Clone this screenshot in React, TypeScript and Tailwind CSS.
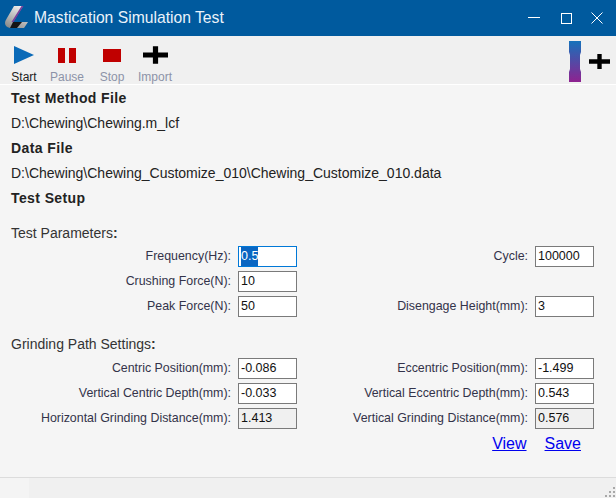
import React from "react";

const font = { fontFamily: '"Liberation Sans", Arial, sans-serif' };

function Plus({ w, h }: { w: number; h: number }) {
  return (
    <svg width={w} height={h} viewBox="0 0 24 17">
      <path d="M9.5 0h5v6H24v5h-9.500v6h-5v-6H0V6h9.500z" fill="#000" />
    </svg>
  );
}

function Tool({ label, active, icon, w }: { label: string; active?: boolean; icon: React.ReactNode; w: string }) {
  return (
    <div className={`flex flex-col items-center ${w}`}>
      <div className="flex h-[26px] items-center justify-center">{icon}</div>
      <span className={`mt-[2px] text-[12px] leading-[14px] ${active ? "text-[#222]" : "text-[#8c93a8]"}`}>{label}</span>
    </div>
  );
}

function Field({ label, value, focused, readOnly }: { label: string; value?: string; focused?: boolean; readOnly?: boolean }) {
  return (
    <div className="flex h-[21px] items-center justify-end">
      <span className="mr-[7px] whitespace-nowrap text-[12.4px] leading-none text-[#33334a]">{label}</span>
      <div
        className={`flex h-[21px] w-[59px] shrink-0 items-center border pl-[2px] text-[12.5px] ${
          focused ? "border-[#0078d7] bg-white" : readOnly ? "border-[#7a7a7a] bg-[#f0f0f0]" : "border-[#7a7a7a] bg-white"
        } text-[#111]`}
      >
        {focused ? <span className="bg-[#0a66c2] text-white">{value}</span> : <span className="-mt-[1px]">{value}</span>}
      </div>
    </div>
  );
}

function Spacer() {
  return <div className="h-[21px]" />;
}

export default function App() {
  return (
    <div className="flex h-[498px] w-[616px] flex-col overflow-hidden bg-[#f5f5f5]" style={font}>
      {/* Title bar */}
      <div className="flex h-[36px] shrink-0 items-center bg-[#005a9e] text-white">
        <svg width="26" height="26" viewBox="0 0 26 26" className="ml-[4px]">
          <defs>
            <linearGradient id="lg" x1="0.7" y1="0" x2="0.2" y2="1">
              <stop offset="0" stopColor="#f0f0f0" />
              <stop offset="1" stopColor="#8a8a8a" />
            </linearGradient>
          </defs>
          <path d="M10 1h9L9 17h15l-4 6H6Q1 22 1 18Q1 16 3 13z" fill="url(#lg)" />
          <path d="M17.500 1h2L9.500 17h-2z" fill="#7a3f9a" />
          <path d="M9 17h9l-5 6H6z" fill="#141414" />
        </svg>
        <span className="ml-[4px] text-[15.7px] text-[#eaf2fa]">Mastication Simulation Test</span>
        <div className="ml-auto flex items-center">
          <svg width="12" height="12" viewBox="0 0 12 12" className="mr-[21px]"><path d="M0 5.500h12" stroke="#fff" /></svg>
          <svg width="11" height="11" viewBox="0 0 11 11" className="mr-[19px]"><rect x=".5" y=".5" width="10" height="10" fill="none" stroke="#fff" /></svg>
          <svg width="12" height="12" viewBox="0 0 12 12" className="mr-[13px]"><path d="M.5.5l11 11M11.500.5l-11 11" stroke="#fff" /></svg>
        </div>
      </div>

      {/* Toolbar */}
      <div className="flex h-[48px] shrink-0 items-start bg-[#f0f0f0] pl-[9px] pt-[6px]">
        <Tool
          label="Start"
          active
          w="w-[30px]"
          icon={<svg width="20" height="18" viewBox="0 0 20 18"><path d="M0 0l20 9L0 18z" fill="#0a6ab8" /></svg>}
        />
        <Tool
          label="Pause"
          w="w-[38px] ml-[9px]"
          icon={<svg width="18" height="15" viewBox="0 0 18 15"><path d="M0 0h7v15H0zM11 0h7v15h-7z" fill="#c00000" /></svg>}
        />
        <Tool
          label="Stop"
          w="w-[30px] ml-[11px]"
          icon={<svg width="18" height="13" viewBox="0 0 18 13"><rect width="18" height="13" fill="#c00000" /></svg>}
        />
        <Tool label="Import" w="w-[36px] ml-[10px]" icon={<Plus w={25} h={18} />} />
        <div className="ml-auto mr-[6px] -mt-[1px] flex items-center">
          <svg width="12" height="41" viewBox="0 0 12 41">
            <defs>
              <linearGradient id="sp" x1="0" y1="0" x2="0" y2="1">
                <stop offset="0" stopColor="#1672bb" />
                <stop offset="1" stopColor="#8f2290" />
              </linearGradient>
            </defs>
            <path d="M0 0h12v11l-1 3v14l1 3v10H0V31l1-3V14l-1-3z" fill="url(#sp)" />
          </svg>
          <div className="ml-[8px] flex"><Plus w={21} h={17} /></div>
        </div>
      </div>
      <div className="h-px shrink-0 bg-white" />

      {/* File info */}
      <div className="flex flex-col px-[11px] pt-px text-[#222]">
        <div className="flex h-[25px] items-center text-[14px] font-bold tracking-[0.4px]">Test Method File</div>
        <div className="flex h-[25px] items-center text-[14px]">D:\Chewing\Chewing.m_lcf</div>
        <div className="flex h-[25px] items-center text-[14px] font-bold tracking-[0.4px]">Data File</div>
        <div className="flex h-[25px] items-center text-[14px]">D:\Chewing\Chewing_Customize_010\Chewing_Customize_010.data</div>
        <div className="flex h-[25px] items-center text-[14px] font-bold tracking-[0.4px]">Test Setup</div>
      </div>

      {/* Parameters */}
      <div className="mt-[14px] px-[11px] text-[14px] leading-[16px] text-[#333]">
        Test Parameters<b>:</b>
      </div>
      <div className="mt-[5px] grid w-[594px] grid-cols-[297px_297px] gap-y-[4px]">
        <Field label="Frequency(Hz):" value="0.5" focused />
        <Field label="Cycle:" value="100000" />
        <Field label="Crushing Force(N):" value="10" />
        <Spacer />
        <Field label="Peak Force(N):" value="50" />
        <Field label="Disengage Height(mm):" value="3" />
      </div>

      <div className="mt-[19px] px-[11px] text-[14px] leading-[16px] text-[#333]">
        Grinding Path Settings<b>:</b>
      </div>
      <div className="mt-[6px] grid w-[594px] grid-cols-[297px_297px] gap-y-[4px]">
        <Field label="Centric Position(mm):" value="-0.086" />
        <Field label="Eccentric Position(mm):" value="-1.499" />
        <Field label="Vertical Centric Depth(mm):" value="-0.033" />
        <Field label="Vertical Eccentric Depth(mm):" value="0.543" />
        <Field label="Horizontal Grinding Distance(mm):" value="1.413" readOnly />
        <Field label="Vertical Grinding Distance(mm):" value="0.576" readOnly />
      </div>

      {/* Links */}
      <div className="mt-[6px] flex justify-end pr-[35px] text-[16px] leading-[18px] text-[#0000ee]">
        <a className="underline" href="#">View</a>
        <a className="ml-[18px] underline" href="#">Save</a>
      </div>

      {/* Status bar */}
      <div className="relative mt-auto flex h-[21px] shrink-0 border-t border-[#dcdcdc] bg-[#f0f0f0]">
        <div className="h-full w-[29px] bg-[#f4f4f4]" />
        <svg width="12" height="12" viewBox="0 0 12 12" className="absolute bottom-0 right-0">
          <g fill="#a8a8a8">
            <rect x="9" y="1" width="2" height="2" />
            <rect x="5" y="5" width="2" height="2" />
            <rect x="9" y="5" width="2" height="2" />
            <rect x="1" y="9" width="2" height="2" />
            <rect x="5" y="9" width="2" height="2" />
            <rect x="9" y="9" width="2" height="2" />
          </g>
        </svg>
      </div>
    </div>
  );
}
